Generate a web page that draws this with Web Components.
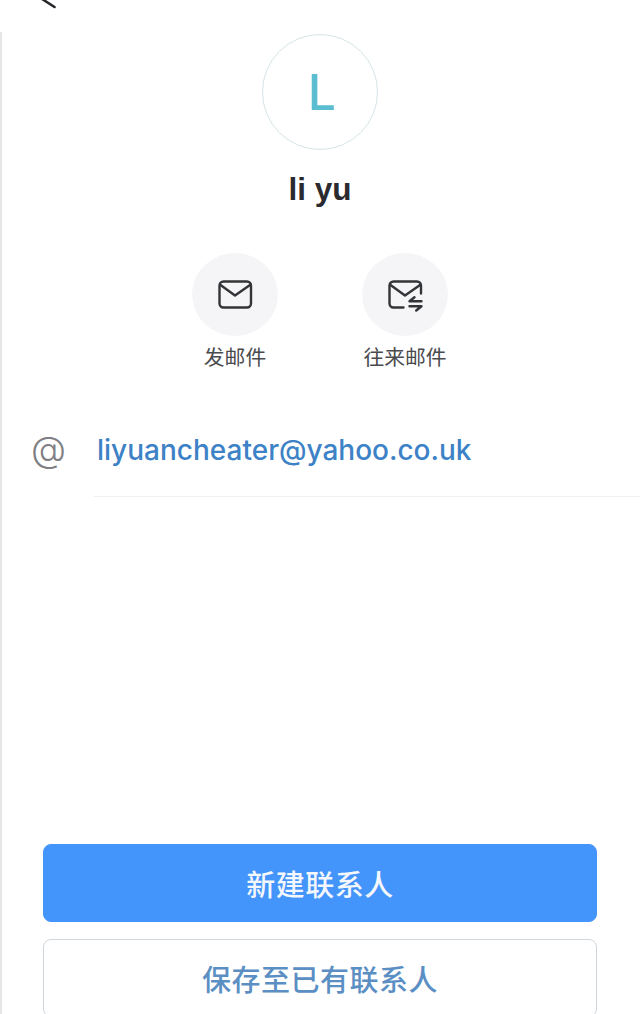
<!DOCTYPE html>
<html>
<head>
<meta charset="utf-8">
<style>
html, body { margin: 0; padding: 0; background: #fff; }
body { width: 640px; height: 1014px; overflow: hidden; font-family: "Inter", "Noto Sans CJK SC", sans-serif; }
</style>
</head>
<body>
<contact-card>
  <contact-avatar slot="head" letter="L" name="li yu"></contact-avatar>
  <action-item slot="actions" icon="mail">发邮件</action-item>
  <action-item slot="actions" icon="swap">往来邮件</action-item>
  <email-row slot="rows">liyuancheater@yahoo.co.uk</email-row>
  <contact-button slot="buttons" kind="primary">新建联系人</contact-button>
  <contact-button slot="buttons">保存至已有联系人</contact-button>
</contact-card>
<script>
const CJK = `"Noto Sans CJK SC", sans-serif`;

class ContactCard extends HTMLElement {
  constructor() {
    super();
    this.attachShadow({ mode: "open" });
    this.shadowRoot.innerHTML = `<style>
:host { display: flex; flex-direction: column; height: 1014px; overflow: hidden; }
.top { height: 32px; flex: none; overflow: hidden; padding-left: 36px; }
.top svg { display: block; }
.page { flex: 1; display: flex; flex-direction: column; min-height: 0; border-left: 2px solid #e6e6e6; }
.actions { display: flex; justify-content: center; gap: 84px; margin-top: 45px; margin-left: -2px; }
.rows { margin-top: 48px; }
.buttons { margin-top: auto; display: flex; flex-direction: column; gap: 17px; padding: 0 43px 0 41px; margin-bottom: -3px; }
</style>
<div class="top">
  <svg width="24" height="12" viewBox="0 0 24 12" fill="none"><path d="M6 -1 L18.500 7" stroke="#26262a" stroke-width="2.600" stroke-linecap="round"/></svg>
</div>
<div class="page">
  <slot name="head"></slot>
  <div class="actions"><slot name="actions"></slot></div>
  <div class="rows"><slot name="rows"></slot></div>
  <div class="buttons"><slot name="buttons"></slot></div>
</div>`;
  }
}
customElements.define("contact-card", ContactCard);

class ContactAvatar extends HTMLElement {
  constructor() {
    super();
    this.attachShadow({ mode: "open" });
  }
  connectedCallback() {
    this.shadowRoot.innerHTML = `<style>
:host { display: flex; flex-direction: column; align-items: center; padding-top: 2px; margin-left: -2px; }
.circle { width: 116px; height: 116px; box-sizing: border-box; border-radius: 50%; border: 1px solid #d5e4e6; padding-left: 4px;
  display: flex; align-items: center; justify-content: center; color: #5bbdd0; font-size: 50px; font-weight: 500; line-height: 1; }
.name { margin-top: 20px; font: 700 31.500px/38px "Liberation Sans", sans-serif; color: #2b2b2f; }
</style>
<div class="circle">${this.getAttribute("letter")}</div>
<div class="name">${this.getAttribute("name")}</div>`;
  }
}
customElements.define("contact-avatar", ContactAvatar);

const ICONS = {
  mail: `<rect x="2.500" y="4.500" width="31.500" height="26" rx="4"/><path d="M3.500 8 L18 18.500 L33 8"/>`,
  swap: `<path d="M16.500 30.500 H6.500 A4 4 0 0 1 2.500 26.500 V8.500 A4 4 0 0 1 6.500 4.500 H30 A4 4 0 0 1 34 8.500 V16.500"/><path d="M3.500 8 L18 18.500 L33 8"/><path d="M34.500 24.200 H22.500 L27.500 20.200"/><path d="M22.500 29.200 H34.500 L29.200 33.500"/>`,
};

class ActionItem extends HTMLElement {
  constructor() {
    super();
    this.attachShadow({ mode: "open" });
  }
  connectedCallback() {
    this.shadowRoot.innerHTML = `<style>
:host { display: flex; flex-direction: column; align-items: center; width: 86px; }
.circle { width: 86px; height: 83px; border-radius: 50%; background: #f5f5f7; display: flex; align-items: center; justify-content: center; }
svg { fill: none; stroke: #333437; stroke-width: 2.400; stroke-linecap: round; stroke-linejoin: round; }
.label { margin-top: 6px; font: 20.800px/28px ${CJK}; color: #4a4a4e; white-space: nowrap; }
</style>
<div class="circle"><svg width="36" height="36" viewBox="0 0 36 36">${ICONS[this.getAttribute("icon")]}</svg></div>
<div class="label"><slot></slot></div>`;
  }
}
customElements.define("action-item", ActionItem);

class EmailRow extends HTMLElement {
  constructor() {
    super();
    this.attachShadow({ mode: "open" });
    this.shadowRoot.innerHTML = `<style>
:host { display: flex; align-items: stretch; }
.at { width: 92px; box-sizing: border-box; padding: 9px 0 0 29px; font: 300 36px/44px "Inter", sans-serif; color: #808084; }
.body { flex: 1; height: 68px; padding: 10px 0 0 3px; border-bottom: 1px solid #efefef; font: 500 28px/44px "Inter", sans-serif; color: #3d82c6; white-space: nowrap; }
</style>
<div class="at">@</div>
<div class="body"><slot></slot></div>`;
  }
}
customElements.define("email-row", EmailRow);

class ContactButton extends HTMLElement {
  constructor() {
    super();
    this.attachShadow({ mode: "open" });
    this.shadowRoot.innerHTML = `<style>
:host { display: flex; align-items: center; justify-content: center; height: 78px; box-sizing: border-box; border-radius: 8px;
  border: 1px solid #cfd6dc; background: #fff; color: #5b8fc4; font: 500 29px/1 ${CJK}; letter-spacing: 0.500px; }
:host([kind="primary"]) { background: #4394fb; border-color: #4394fb; color: #f4f7fb; }
</style>
<slot></slot>`;
  }
}
customElements.define("contact-button", ContactButton);
</script>
</body>
</html>
